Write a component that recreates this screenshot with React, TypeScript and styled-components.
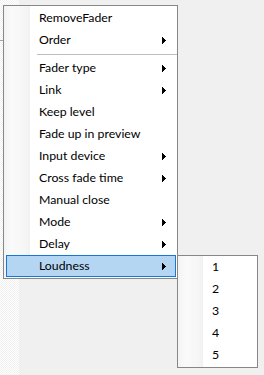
import React from "react";
import styled, { createGlobalStyle } from "styled-components";

const GlobalStyle = createGlobalStyle`
  html, body {
    margin: 0;
    padding: 0;
    background: #f0f0f0;
  }
  body {
    font-family: Lato, "Open Sans", sans-serif;
    font-size: 12.3px;
    color: #000;
  }
`;

type Entry = { label: string; sub?: boolean; active?: boolean } | "sep";

const mainItems: Entry[] = [
  { label: "RemoveFader" },
  { label: "Order", sub: true },
  "sep",
  { label: "Fader type", sub: true },
  { label: "Link", sub: true },
  { label: "Keep level" },
  { label: "Fade up in preview" },
  { label: "Input device", sub: true },
  { label: "Cross fade time", sub: true },
  { label: "Manual close" },
  { label: "Mode", sub: true },
  { label: "Delay", sub: true },
  { label: "Loudness", sub: true, active: true },
];

const loudnessItems = ["1", "2", "3", "4", "5"];

const Page = styled.div`
  position: relative;
  width: 264px;
  height: 375px;
  display: flex;
  overflow: hidden;
`;

const SidePane = styled.div`
  width: 19px;
  background: repeating-conic-gradient(#ffffff 0 25%, #f1f1f1 0 50%) 0 0 / 2px 2px;
`;

const PaneRule = styled.div`
  margin-top: 40px;
  border-top: 1px solid #a3a3a3;
`;

const Workspace = styled.div`
  flex: 1;
  background: #f0f0f0;
`;

// popup menus float over the window
const Menu = styled.div<{ $left: number; $top: number; $width: number; $strip: number }>`
  position: absolute;
  left: ${(p) => p.$left}px;
  top: ${(p) => p.$top}px;
  width: ${(p) => p.$width}px;
  box-sizing: border-box;
  border: 1px solid #878787;
  padding: ${(p) => (p.$strip > 25 ? "1px 0" : "0 0 1px")};
  display: flex;
  flex-direction: column;
  background:
    linear-gradient(to right, #f3f3f3, #fafafa 30%, #f6f6f6 80%, #f1f1f1) 0 0 / ${(p) => p.$strip}px 100% no-repeat,
    #ffffff;
`;

const Row = styled.div<{ $active?: boolean; $indent: number }>`
  height: 22px;
  box-sizing: border-box;
  margin: 0 1px 0 2px;
  padding-left: ${(p) => p.$indent}px;
  display: flex;
  align-items: center;
  border: 1px solid ${(p) => (p.$active ? "#1479d4" : "transparent")};
  background: ${(p) => (p.$active ? "#b5d6f3" : "transparent")};
  white-space: nowrap;
`;

const Label = styled.span`
  flex: 1;
  line-height: 14px;
`;

const Arrow = styled.svg`
  width: 4px;
  height: 7px;
  margin-right: 9px;
  flex: none;
`;

const Separator = styled.div`
  height: 6px;
  display: flex;
  align-items: center;
  padding-left: 33px;
  &::after {
    content: "";
    flex: 1;
    height: 1px;
    background: #bdbdbd;
  }
`;

function SubArrow() {
  return (
    <Arrow viewBox="0 0 4 7" shapeRendering="crispEdges">
      <polygon points="0,0 4,3.5 0,7" fill="#000" />
    </Arrow>
  );
}

export default function App() {
  return (
    <>
      <GlobalStyle />
      <Page>
        <SidePane>
          <PaneRule />
        </SidePane>
        <Workspace />
        <Menu $left={3} $top={5} $width={175} $strip={26}>
          {mainItems.map((it, i) =>
            it === "sep" ? (
              <Separator key={i} />
            ) : (
              <Row key={i} $active={it.active} $indent={32}>
                <Label>{it.label}</Label>
                {it.sub && <SubArrow />}
              </Row>
            )
          )}
        </Menu>
        <Menu $left={177} $top={255} $width={81} $strip={25}>
          {loudnessItems.map((n) => (
            <Row key={n} $indent={31}>
              <Label>{n}</Label>
            </Row>
          ))}
        </Menu>
      </Page>
    </>
  );
}
